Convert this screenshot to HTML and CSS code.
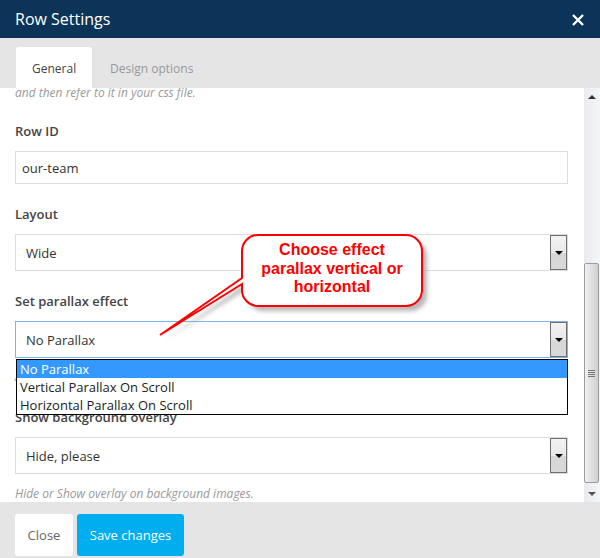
FILE: index.html
```html
<!DOCTYPE html>
<html lang="en">
<head>
    <meta charset="UTF-8">
    <title>Row Settings</title>
    <link rel="stylesheet" href="styles.css">
</head>
<body>
    <div class="modal">
        <!-- Header -->
        <header class="modal-header">
            <h1>Row Settings</h1>
            <span class="close-x">
                <svg width="12" height="12" viewBox="0 0 12 12"><path d="M1 1L11 11M11 1L1 11" stroke="#fff" stroke-width="2.4"/></svg>
            </span>
        </header>

        <!-- Tabs -->
        <nav class="tabs">
            <span class="tab active">General</span>
            <span class="tab">Design options</span>
        </nav>

        <!-- Body -->
        <div class="modal-body">
            <div class="body-content">
                <p class="help first">and then refer to it in your css file.</p>

                <div class="field">
                    <label>Row ID</label>
                    <div class="input">our-team</div>
                </div>

                <div class="field">
                    <label>Layout</label>
                    <div class="select">
                        <span>Wide</span>
                        <span class="select-btn"></span>
                    </div>
                </div>

                <div class="field">
                    <label>Set parallax effect</label>
                    <div class="select focused">
                        <span>No Parallax</span>
                        <span class="select-btn"></span>
                        <ul class="dropdown">
                            <li class="selected">No Parallax</li>
                            <li>Vertical Parallax On Scroll</li>
                            <li>Horizontal Parallax On Scroll</li>
                        </ul>
                    </div>
                    <p class="help">Add parallax type background for row.</p>
                </div>

                <div class="field">
                    <label>Show background overlay</label>
                    <div class="select">
                        <span>Hide, please</span>
                        <span class="select-btn"></span>
                    </div>
                    <p class="help">Hide or Show overlay on background images.</p>
                </div>
            </div>

            <div class="scrollbar">
                <span class="arrow up"></span>
                <div class="thumb-space">
                    <div class="thumb"><span class="grip"></span></div>
                </div>
                <span class="arrow down"></span>
            </div>
        </div>

        <!-- Footer -->
        <footer class="modal-footer">
            <button class="btn btn-close">Close</button>
            <button class="btn btn-save">Save changes</button>
        </footer>

        <!-- Annotation -->
        <div class="callout">
            <svg class="callout-shape" width="290" height="120" viewBox="150 228 290 120">
                <defs>
                    <filter id="soft" x="-10%" y="-10%" width="130%" height="130%">
                        <feGaussianBlur stdDeviation="2"/>
                    </filter>
                </defs>
                <path d="M258 235H406A16 16 0 0 1 422 251V290A16 16 0 0 1 406 306H258A16 16 0 0 1 242 290V284L160 335L242 278V251A16 16 0 0 1 258 235Z" fill="#999" opacity="0.7" filter="url(#soft)" transform="translate(5 5)"/>
                <path d="M258 235H406A16 16 0 0 1 422 251V290A16 16 0 0 1 406 306H258A16 16 0 0 1 242 290V284L160 335L242 278V251A16 16 0 0 1 258 235Z" fill="#fff" stroke="#f00" stroke-width="2"/>
            </svg>
            <p class="callout-text">Choose effect<br>parallax vertical or<br>horizontal</p>
        </div>
    </div>
</body>
</html>
```

FILE: styles.css
```css
/* Global */
* {
    margin: 0;
    padding: 0;
    box-sizing: border-box;
}
body {
    font-family: 'Open Sans', 'Liberation Sans', sans-serif;
    font-size: 13px;
    color: #333;
    background: #fff;
}

.modal {
    position: relative;
    width: 600px;
    height: 558px;
    display: flex;
    flex-direction: column;
    overflow: hidden;
}

/* Header */
.modal-header {
    height: 38px;
    background: #0b3458;
    display: flex;
    align-items: center;
    justify-content: space-between;
    padding: 0 16px 0 15px;
}
.modal-header h1 {
    font-size: 16px;
    font-weight: normal;
    color: #fff;
    line-height: 1;
}
.close-x {
    display: flex;
    margin-top: 1px;
}

/* Tabs */
.tabs {
    height: 50px;
    background: #e5e5e5;
    display: flex;
    align-items: flex-end;
    padding-left: 16px;
    font-size: 12px;
}
.tab {
    height: 41px;
    line-height: 43px;
    padding: 0 17px;
    color: #999;
}
.tab.active {
    background: #fff;
    color: #444;
    border-radius: 3px 3px 0 0;
    padding: 0 16px;
    width: 76px;
    margin-right: 1px;
}

/* Body */
.modal-body {
    height: 414px;
    display: flex;
    overflow: hidden;
}
.body-content {
    flex: 1;
    padding: 0 16px 0 15px;
    overflow: hidden;
}

.help {
    font-size: 12px;
    font-style: italic;
    color: #999;
    line-height: 20px;
    margin-top: 9px;
}
.help.first {
    margin-top: -5px;
    margin-bottom: 18px;
}

.field {
    margin-bottom: 20px;
}
.field:last-child .help {
    margin-top: 10px;
}
.field label {
    display: block;
    font-weight: 600;
    color: #444;
    line-height: 20px;
    margin-bottom: 10px;
}
.input {
    height: 33px;
    line-height: 32px;
    border: 1px solid #ddd;
    padding: 0 6px;
    color: #333;
}

.select {
    position: relative;
    height: 37px;
    border: 1px solid #ddd;
    padding-left: 10px;
    display: flex;
    align-items: center;
    justify-content: space-between;
    color: #333;
}
.select.focused {
    border-color: #7eb4ea;
}
.select-btn {
    width: 17px;
    height: 35px;
    border: 1px solid #6f6f6f;
    background: linear-gradient(#f3f3f3 0%, #e8e8e8 50%, #d6d6d6 51%, #d9d9d9 100%);
    display: flex;
    align-items: center;
    justify-content: center;
}
.select-btn::after {
    content: "";
    border-left: 4px solid transparent;
    border-right: 4px solid transparent;
    border-top: 4px solid #000;
    margin-top: 1px;
}

/* Open option list */
.dropdown {
    position: absolute;
    top: 37px;
    left: 0;
    right: -1px;
    list-style: none;
    background: #fff;
    border: 1px solid #000;
    z-index: 2;
}
.dropdown li {
    height: 18px;
    line-height: 19px;
    padding-left: 3px;
    color: #222;
}
.dropdown li.selected {
    background: #3399ff;
    color: #fff;
}

/* Scrollbar */
.scrollbar {
    width: 16px;
    background: linear-gradient(90deg, #e9ebee, #f4f5f7);
    display: flex;
    flex-direction: column;
}
.arrow {
    height: 17px;
    display: flex;
    align-items: center;
    justify-content: center;
}
.arrow.up::after {
    content: "";
    border-left: 4px solid transparent;
    border-right: 4px solid transparent;
    border-bottom: 4px solid #333;
}
.arrow.down::after {
    content: "";
    border-left: 4px solid transparent;
    border-right: 4px solid transparent;
    border-top: 4px solid #555;
}
.thumb-space {
    flex: 1;
    padding-top: 158px;
}
.thumb {
    height: 220px;
    margin: 0 1px 0 0;
    border: 1px solid #9c9c9c;
    border-radius: 2px;
    background: linear-gradient(90deg, #f0f0f0, #dcdcdc 60%, #cfcfcf);
    display: flex;
    align-items: center;
    justify-content: center;
}
.grip {
    width: 7px;
    height: 7px;
    background: repeating-linear-gradient(#777 0 1px, transparent 1px 2px);
}

/* Footer */
.modal-footer {
    height: 56px;
    background: #e5e5e5;
    display: flex;
    align-items: flex-start;
    gap: 4px;
    padding: 12px 15px 0;
}
.btn {
    height: 42px;
    border: none;
    border-radius: 3px;
    font-family: 'Open Sans', 'Liberation Sans', sans-serif;
    font-size: 13px;
    cursor: pointer;
}
.btn-close {
    width: 58px;
    background: #fff;
    color: #666;
}
.btn-save {
    width: 107px;
    background: #00aeef;
    color: #fff;
}

/* Annotation */
.callout {
    position: absolute;
    left: 150px;
    top: 228px;
    width: 290px;
    height: 120px;
    z-index: 3;
}
.callout-shape {
    display: block;
}
.callout-text {
    position: absolute;
    left: 92px;
    top: 13px;
    width: 180px;
    text-align: center;
    font-family: 'Liberation Sans', Arial, sans-serif;
    font-weight: bold;
    font-size: 16px;
    line-height: 18.5px;
    color: #f00;
}
```
